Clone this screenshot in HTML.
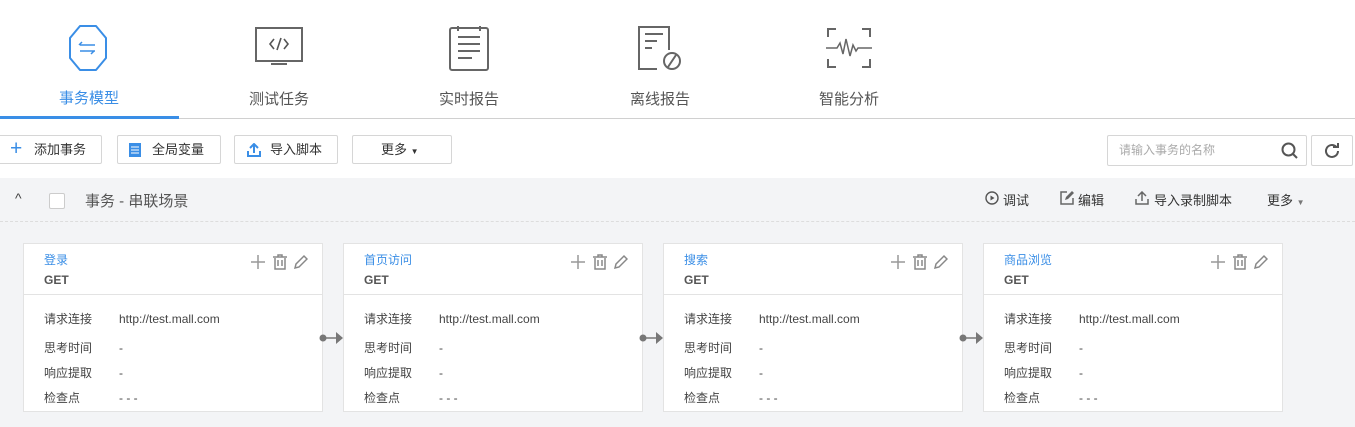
<!DOCTYPE html>
<html><head><meta charset="utf-8"><style>
*{margin:0;padding:0;box-sizing:border-box}
body{width:1355px;height:427px;overflow:hidden;background:#f3f4f6;font-family:"Liberation Sans","Noto Sans CJK SC",sans-serif;font-size:13px;color:#333;position:relative}
.top{position:absolute;left:0;top:0;width:1355px;height:178px;background:#fff}
.abs{position:absolute}
.tabl{position:absolute;top:88px;font-size:15px;color:#555;width:120px;text-align:center}
.btn{position:absolute;top:135px;height:29px;border:1px solid #d6d6d6;border-radius:2px;background:#fff;font-size:13px;color:#333;line-height:27px}
.card{position:absolute;top:243px;width:300px;height:169px;background:#fff;border:1px solid #e3e3e3}
.card div{line-height:16px;white-space:nowrap}
.card .t{position:absolute;left:20px;top:8px;color:#3a8ee6;font-size:12px}
.card .g{position:absolute;left:20px;top:28px;color:#555;font-size:12px;font-weight:bold}
.card .hd{position:absolute;left:0;top:50px;width:100%;border-top:1px solid #e3e3e3}
.card .r{position:absolute;left:20px;font-size:12px;color:#444}
.card .v{position:absolute;left:75px;font-size:12px;color:#444;top:0}
.card .ic{position:absolute;right:14px;top:9px}
.arr{position:absolute;top:330px}
.hi{position:absolute;top:190px;font-size:13px;color:#333}
</style></head><body>
<div class="top"></div>
<svg class="abs" style="left:68px;top:24px" width="40" height="48" viewBox="0 0 40 48"><path d="M12 2 H28 L38 14 V34 L28 46 H12 L2 34 V14 Z" fill="none" stroke="#3a8ee6" stroke-width="2" stroke-linejoin="round"/><path d="M12 21 H27 M14 18 L11 21 M12 27 H27 M26 27 L23 30" stroke="#3a8ee6" stroke-width="1.5" fill="none"/></svg>
<svg class="abs" style="left:254px;top:27px" width="52" height="44" viewBox="0 0 52 44"><rect x="2" y="1" width="46" height="33" fill="none" stroke="#666" stroke-width="2"/><path d="M17 37 H33" stroke="#666" stroke-width="2"/><path d="M20 12 L16 17 L20 22 M30 12 L34 17 L30 22 M27 11 L23 23" stroke="#555" stroke-width="1.6" fill="none"/></svg>
<svg class="abs" style="left:448px;top:24px" width="44" height="48" viewBox="0 0 44 48"><rect x="2" y="4" width="38" height="42" rx="2" fill="none" stroke="#666" stroke-width="2"/><path d="M10 2 V7 M32 2 V7 M10 13 H32 M10 20 H32 M10 27 H32 M10 34 H24" stroke="#666" stroke-width="2"/></svg>
<svg class="abs" style="left:637px;top:25px" width="50" height="48" viewBox="0 0 50 48"><path d="M32 25 V2 H2 V44 H20" fill="none" stroke="#666" stroke-width="2"/><path d="M8 9 H26 M8 16 H20 M8 23 H15" stroke="#666" stroke-width="2"/><circle cx="35" cy="36" r="8" fill="none" stroke="#666" stroke-width="2"/><path d="M31 42 L39 30" stroke="#666" stroke-width="2"/></svg>
<svg class="abs" style="left:826px;top:27px" width="46" height="42" viewBox="0 0 46 42"><path d="M2 10 V2 H10 M36 2 H44 V10 M2 32 V40 H10 M36 40 H44 V32" fill="none" stroke="#666" stroke-width="2"/><path d="M0 21 H11 L14 16 L17 27 L20 12 L24 29 L27 18 L30 24 L32 21 H46" fill="none" stroke="#666" stroke-width="1.5"/></svg>
<div class="tabl" style="left:29px;color:#3a8ee6;top:87px">事务模型</div>
<div class="tabl" style="left:219px">测试任务</div>
<div class="tabl" style="left:409px">实时报告</div>
<div class="tabl" style="left:600px">离线报告</div>
<div class="tabl" style="left:789px">智能分析</div>
<div class="abs" style="left:0;top:118px;width:1355px;height:1px;background:#d0d0d0"></div>
<div class="abs" style="left:0;top:116px;width:179px;height:3px;background:#3a8ee6"></div>
<div class="btn" style="left:-2px;width:104px"><span class="abs" style="left:11px;top:-1px;color:#3a8ee6;font-size:21px;font-weight:300">+</span><span class="abs" style="left:35px">添加事务</span></div>
<div class="btn" style="left:117px;width:104px"><svg class="abs" style="left:11px;top:7px" width="12" height="14"><rect width="12" height="14" fill="#3a8ee6"/><path d="M2 4H10M2 7H10M2 10H10" stroke="#fff" stroke-width="1"/></svg><span class="abs" style="left:34px">全局变量</span></div>
<div class="btn" style="left:234px;width:104px"><svg class="abs" style="left:12px;top:7px" width="14" height="14"><path d="M7 10V1M3 5L7 1L11 5M1 8V13H13V8" stroke="#3a8ee6" stroke-width="2" fill="none"/></svg><span class="abs" style="left:35px">导入脚本</span></div>
<div class="btn" style="left:352px;width:100px"><span class="abs" style="left:28px">更多 <span style="font-size:8px">▼</span></span></div>
<div class="btn" style="left:1107px;width:200px;height:31px"><span class="abs" style="left:11px;top:1px;color:#aaa;font-size:12px">请输入事务的名称</span><svg class="abs" style="left:173px;top:6px" width="18" height="18"><circle cx="7.5" cy="7.5" r="6" stroke="#555" stroke-width="2" fill="none"/><path d="M12 12L16 16" stroke="#555" stroke-width="2"/></svg></div>
<div class="btn" style="left:1311px;width:42px;height:31px"><svg class="abs" style="left:11px;top:6px" width="18" height="18"><path d="M15 9A6 6 0 1 1 13 4.5" stroke="#555" stroke-width="2" fill="none"/><path d="M10 3H15V-1" stroke="#555" stroke-width="2" fill="none" transform="translate(0,2)"/></svg></div>
<div class="hi" style="left:15px;top:190px;font-size:14px;color:#444">^</div>
<div class="abs" style="left:49px;top:193px;width:16px;height:16px;border:1px solid #ccc;border-radius:2px;background:#fff"></div>
<div class="hi" style="left:85px;top:190px;font-size:15px;color:#555">事务 - 串联场景</div>
<svg class="abs" style="left:985px;top:191px" width="14" height="14"><circle cx="7" cy="7" r="6" stroke="#555" stroke-width="1.4" fill="none"/><path d="M5.5 4.5V9.5L9.5 7Z" fill="#555"/></svg><div class="hi" style="left:1003px">调试</div>
<svg class="abs" style="left:1060px;top:191px" width="15" height="14"><path d="M7 1H1V13H13V7" stroke="#666" stroke-width="1.5" fill="none"/><path d="M5 9L6 6L12 0L14 2L8 8Z" fill="#666"/></svg><div class="hi" style="left:1078px">编辑</div>
<svg class="abs" style="left:1135px;top:191px" width="14" height="14"><path d="M7 10V1M3 5L7 1L11 5M1 8V13H13V8" stroke="#666" stroke-width="1.5" fill="none"/></svg><div class="hi" style="left:1154px">导入录制脚本</div>
<div class="hi" style="left:1267px">更多 <span style="font-size:8px;color:#777">▼</span></div>
<div class="abs" style="left:0;top:221px;width:1355px;border-top:1px dashed #ddd"></div>

<div class="card" style="left:23px"><div class="t">登录</div><div class="g">GET</div><div class="hd"></div>
<svg class="ic" width="58" height="18"><path d="M8 2V16M1 9H15" stroke="#999" stroke-width="1.5"/><path d="M23 4H37M28 4V2H32V4M25 5V16H35V5M28 7V13M32 7V13" stroke="#888" stroke-width="1.5" fill="none"/><path d="M45 15L46 11L54 3L57 6L49 14Z" fill="none" stroke="#888" stroke-width="1.5"/></svg>
<div class="r" style="top:67px">请求连接<div class="v">http://test.mall.com</div></div>
<div class="r" style="top:96px">思考时间<div class="v">-</div></div>
<div class="r" style="top:121px">响应提取<div class="v">-</div></div>
<div class="r" style="top:146px">检查点<div class="v">- - -</div></div></div>
<div class="card" style="left:343px"><div class="t">首页访问</div><div class="g">GET</div><div class="hd"></div>
<svg class="ic" width="58" height="18"><path d="M8 2V16M1 9H15" stroke="#999" stroke-width="1.5"/><path d="M23 4H37M28 4V2H32V4M25 5V16H35V5M28 7V13M32 7V13" stroke="#888" stroke-width="1.5" fill="none"/><path d="M45 15L46 11L54 3L57 6L49 14Z" fill="none" stroke="#888" stroke-width="1.5"/></svg>
<div class="r" style="top:67px">请求连接<div class="v">http://test.mall.com</div></div>
<div class="r" style="top:96px">思考时间<div class="v">-</div></div>
<div class="r" style="top:121px">响应提取<div class="v">-</div></div>
<div class="r" style="top:146px">检查点<div class="v">- - -</div></div></div>
<div class="card" style="left:663px"><div class="t">搜索</div><div class="g">GET</div><div class="hd"></div>
<svg class="ic" width="58" height="18"><path d="M8 2V16M1 9H15" stroke="#999" stroke-width="1.5"/><path d="M23 4H37M28 4V2H32V4M25 5V16H35V5M28 7V13M32 7V13" stroke="#888" stroke-width="1.5" fill="none"/><path d="M45 15L46 11L54 3L57 6L49 14Z" fill="none" stroke="#888" stroke-width="1.5"/></svg>
<div class="r" style="top:67px">请求连接<div class="v">http://test.mall.com</div></div>
<div class="r" style="top:96px">思考时间<div class="v">-</div></div>
<div class="r" style="top:121px">响应提取<div class="v">-</div></div>
<div class="r" style="top:146px">检查点<div class="v">- - -</div></div></div>
<div class="card" style="left:983px"><div class="t">商品浏览</div><div class="g">GET</div><div class="hd"></div>
<svg class="ic" width="58" height="18"><path d="M8 2V16M1 9H15" stroke="#999" stroke-width="1.5"/><path d="M23 4H37M28 4V2H32V4M25 5V16H35V5M28 7V13M32 7V13" stroke="#888" stroke-width="1.5" fill="none"/><path d="M45 15L46 11L54 3L57 6L49 14Z" fill="none" stroke="#888" stroke-width="1.5"/></svg>
<div class="r" style="top:67px">请求连接<div class="v">http://test.mall.com</div></div>
<div class="r" style="top:96px">思考时间<div class="v">-</div></div>
<div class="r" style="top:121px">响应提取<div class="v">-</div></div>
<div class="r" style="top:146px">检查点<div class="v">- - -</div></div></div>
<svg class="arr" style="left:318px" width="26" height="16"><circle cx="5" cy="8" r="3.5" fill="#777"/><path d="M5 8H19" stroke="#777" stroke-width="1.5"/><path d="M18 2L25 8L18 14Z" fill="#777"/></svg>
<svg class="arr" style="left:638px" width="26" height="16"><circle cx="5" cy="8" r="3.5" fill="#777"/><path d="M5 8H19" stroke="#777" stroke-width="1.5"/><path d="M18 2L25 8L18 14Z" fill="#777"/></svg>
<svg class="arr" style="left:958px" width="26" height="16"><circle cx="5" cy="8" r="3.5" fill="#777"/><path d="M5 8H19" stroke="#777" stroke-width="1.5"/><path d="M18 2L25 8L18 14Z" fill="#777"/></svg>
</body></html>
